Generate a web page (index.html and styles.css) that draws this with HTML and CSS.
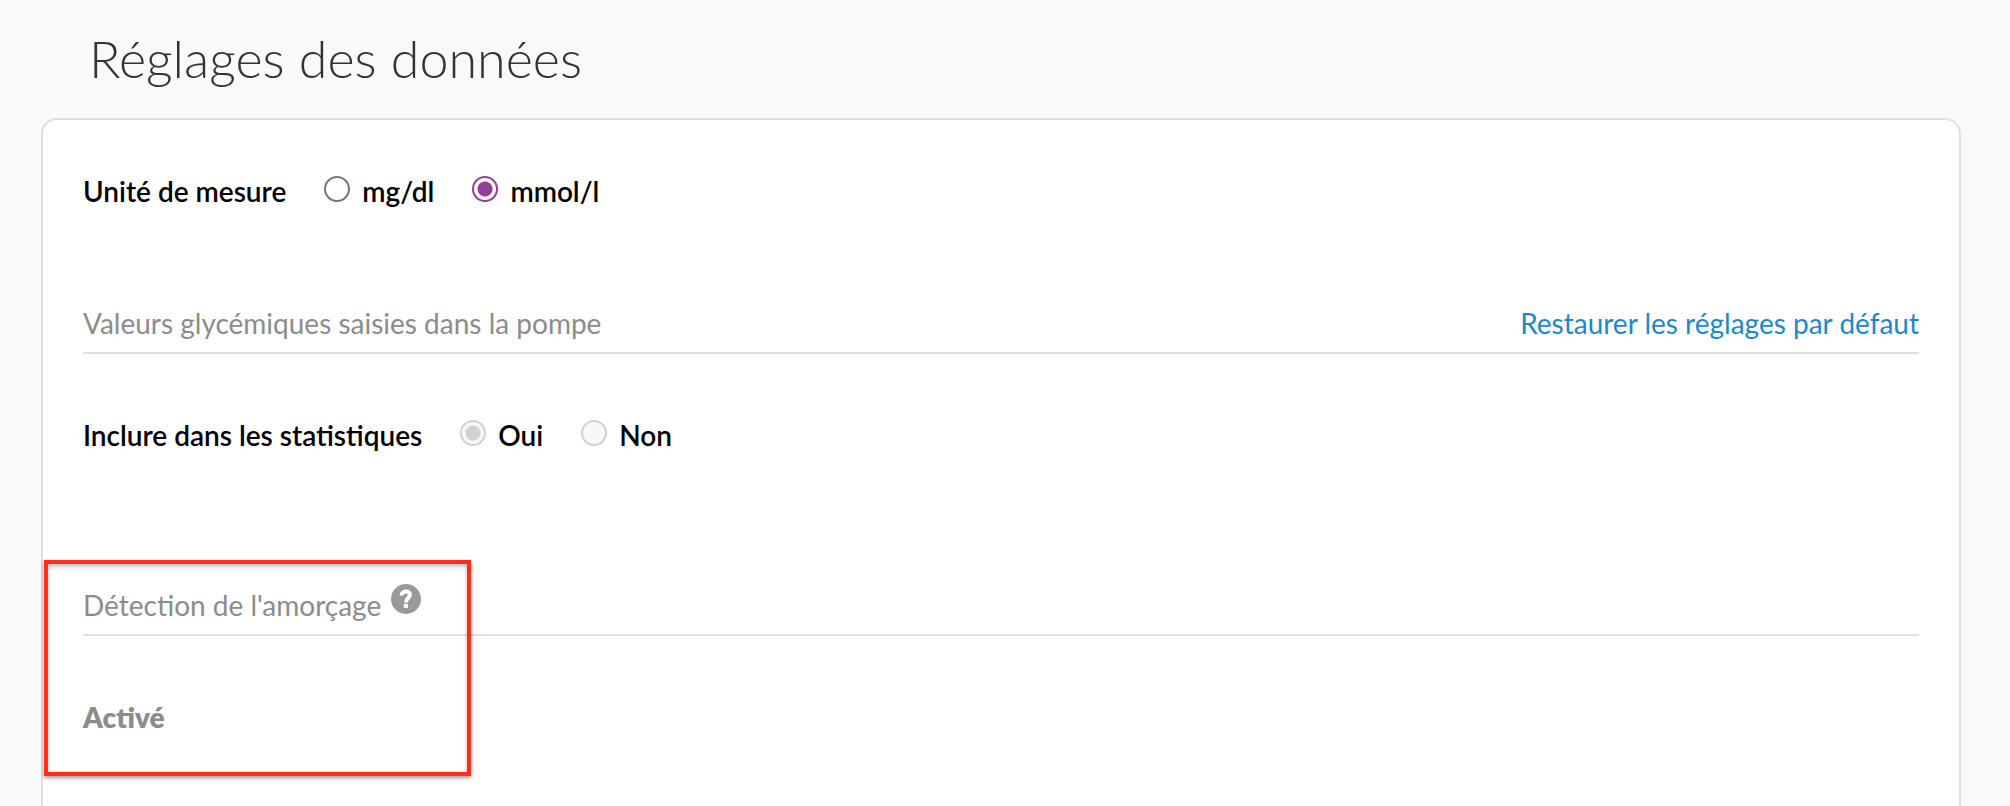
FILE: index.html
```html
<!DOCTYPE html>
<html lang="fr">
<head>
  <meta charset="utf-8">
  <meta name="viewport" content="width=device-width, initial-scale=1">
  <title>Réglages des données</title>
  <link rel="stylesheet" href="styles.css">
</head>
<body>
  <main class="page">
    <h1 class="page-title">Réglages des données</h1>
    <form class="card">
      <div class="field" role="radiogroup" aria-labelledby="unit-label">
        <span class="field-label" id="unit-label">Unité de mesure</span>
        <label class="option"><input class="radio" type="radio" name="unit" value="mgdl">mg/dl</label>
        <label class="option"><input class="radio" type="radio" name="unit" value="mmol" checked>mmol/l</label>
      </div>

      <section class="section">
        <header class="section-header">
          <h2 class="section-title">Valeurs glycémiques saisies dans la pompe</h2>
          <a class="restore-link" href="#">Restaurer les réglages par défaut</a>
        </header>
        <div class="field" role="radiogroup" aria-labelledby="stats-label">
          <span class="field-label" id="stats-label">Inclure dans les statistiques</span>
          <label class="option"><input class="radio" type="radio" name="stats" value="yes" checked disabled>Oui</label>
          <label class="option"><input class="radio" type="radio" name="stats" value="no" disabled>Non</label>
        </div>
      </section>

      <section class="section section-priming">
        <header class="section-header">
          <h2 class="section-title">Détection de l'amorçage</h2>
          <button class="help" type="button" aria-label="Aide">
            <svg viewBox="0 0 30 30" width="30" height="30" aria-hidden="true">
              <circle cx="15" cy="15" r="15" fill="#999"/>
              <path d="M10.6 11.4C10.6 8.8 12.4 7.6 14.8 7.6c2.6 0 4.1 1.4 4.1 3.5 0 3.2-4 3.3-4 7.3" fill="none" stroke="#fff" stroke-width="4"/>
              <path d="M12.8 19.9h4.2v4h-4.2z" fill="#fff"/>
            </svg>
          </button>
        </header>
        <p class="status">Activé</p>
      </section>
      <div class="highlight" aria-hidden="true"></div>
    </form>
  </main>
</body>
</html>
```
FILE: styles.css
```css
* {
  box-sizing: border-box;
}

body {
  margin: 0;
  background: #f9f9f9;
  color: #000;
  font-family: Lato, "Open Sans", sans-serif;
  font-size: 28px;
  line-height: 34px;
}

.page {
  display: flex;
  flex-direction: column;
  min-height: 100vh;
  padding: 26px 49px 0 41px;
}

.page-title {
  margin: 0 0 28px;
  padding-left: 48px;
  color: #333;
  font-size: 52px;
  font-weight: 300;
  line-height: 64px;
}

.card {
  position: relative;
  flex: 1;
  padding: 54px 40px 0;
  border: 2px solid #e0e0e0;
  border-bottom: 0;
  border-radius: 16px 16px 0 0;
  background: #fff;
}

.field {
  display: flex;
  flex-wrap: wrap;
  align-items: baseline;
  gap: 0 38px;
}

.field-label,
.option {
  font-weight: 600;
}

.option {
  display: flex;
  align-items: baseline;
  gap: 12px;
}

.radio {
  appearance: none;
  width: 26px;
  height: 26px;
  margin: 0;
  border: 2px solid #767676;
  border-radius: 50%;
  background: #fff;
}

.radio:checked {
  border-color: #943f97;
  background: radial-gradient(circle, #943f97 0 7px, #fff 8px);
}

.radio:disabled {
  border-color: #d1d1d1;
  background: #f8f8f8;
}

.radio:disabled:checked {
  background: radial-gradient(circle, #d1d1d1 0 7px, #f8f8f8 8px);
}

.section {
  margin-top: 98px;
}

.section-priming {
  margin-top: 136px;
}

.section-header {
  display: flex;
  justify-content: space-between;
  gap: 10px;
  height: 48px;
  margin-bottom: 64px;
  border-bottom: 2px solid #e0e0e0;
}

.section-priming .section-header {
  justify-content: flex-start;
}

.section-title {
  margin: 0;
  color: #8c8c8c;
  font-size: 28px;
  font-weight: 400;
}

.restore-link {
  color: #1e88c7;
  text-decoration: none;
}

.help {
  align-self: flex-start;
  width: 30px;
  height: 30px;
  margin-top: -4px;
  padding: 0;
  border: 0;
  background: none;
  cursor: pointer;
}

.help svg {
  display: block;
}

.status {
  margin: 0;
  color: #8c8c8c;
  font-weight: 800;
}

.highlight {
  position: absolute;
  top: 440px;
  left: 1px;
  width: 427px;
  height: 216px;
  border: 4px solid #ff2d1c;
  box-shadow: 0 2px 4px rgba(0, 0, 0, 0.4), inset 0 2px 4px rgba(0, 0, 0, 0.3);
  pointer-events: none;
}
```
